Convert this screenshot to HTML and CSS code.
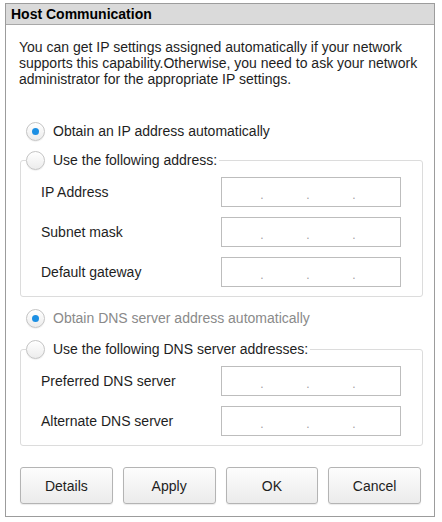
FILE: index.html
```html
<!DOCTYPE html>
<html>
<head>
<meta charset="utf-8">
<link rel="stylesheet" href="styles.css">
</head>
<body>
<div class="dialog">
  <div class="titlebar">Host Communication</div>
  <div class="content">
    <p class="intro">You can get IP settings assigned automatically if your network supports this capability.Otherwise, you need to ask your network administrator for the appropriate IP settings.</p>

    <div class="radio-row first"><span class="radio checked"></span><span class="rlabel">Obtain an IP address automatically</span></div>

    <fieldset class="group">
      <legend class="radio-row"><span class="radio"></span><span class="rlabel">Use the following address:</span></legend>
      <div class="rows">
        <div class="field"><span class="flabel">IP Address</span><div class="ipbox"><span></span><i>.</i><span></span><i>.</i><span></span><i>.</i><span></span></div></div>
        <div class="field"><span class="flabel">Subnet mask</span><div class="ipbox"><span></span><i>.</i><span></span><i>.</i><span></span><i>.</i><span></span></div></div>
        <div class="field"><span class="flabel">Default gateway</span><div class="ipbox"><span></span><i>.</i><span></span><i>.</i><span></span><i>.</i><span></span></div></div>
      </div>
    </fieldset>

    <div class="radio-row second"><span class="radio checked"></span><span class="rlabel disabled">Obtain DNS server address automatically</span></div>

    <fieldset class="group dns">
      <legend class="radio-row"><span class="radio"></span><span class="rlabel">Use the following DNS server addresses:</span></legend>
      <div class="rows">
        <div class="field"><span class="flabel">Preferred DNS server</span><div class="ipbox"><span></span><i>.</i><span></span><i>.</i><span></span><i>.</i><span></span></div></div>
        <div class="field"><span class="flabel">Alternate DNS server</span><div class="ipbox"><span></span><i>.</i><span></span><i>.</i><span></span><i>.</i><span></span></div></div>
      </div>
    </fieldset>

    <div class="buttons">
      <button class="btn">Details</button>
      <button class="btn">Apply</button>
      <button class="btn">OK</button>
      <button class="btn">Cancel</button>
    </div>
  </div>
</div>
</body>
</html>
```

FILE: styles.css
```css
html, body {
  margin: 0;
  padding: 0;
  background: #ffffff;
}
body {
  font-family: "Liberation Sans", Arial, sans-serif;
  font-size: 14px;
  color: #1e1e1e;
}
.dialog {
  margin: 3px 0 0 5px;
  width: 430px;
  height: 514px;
  box-sizing: border-box;
  border: 1px solid #9c9c9c;
  background: #ffffff;
}
.titlebar {
  height: 20px;
  line-height: 20px;
  background: #dadada;
  border-bottom: 1px solid #a8a8a8;
  padding-left: 5px;
  font-weight: bold;
  color: #000;
}
.content {
  padding: 0 0 0 14px;
}
.intro {
  margin: 14px 0 0 -1px;
  line-height: 16px;
  width: 404px;
}
.radio-row {
  display: flex;
  align-items: center;
  height: 20px;
  gap: 8px;
}
.radio-row.first {
  margin-top: 34px;
  padding-left: 6px;
}
.radio-row.second {
  margin-top: 11px;
  padding-left: 6px;
}
.radio {
  width: 19px;
  height: 19px;
  box-sizing: border-box;
  border-radius: 50%;
  border: 1px solid #c4c4c4;
  background: linear-gradient(#ffffff, #ececec);
  box-shadow: inset 0 1px 1px rgba(255,255,255,0.9), 0 1px 1px rgba(0,0,0,0.06);
  display: flex;
  align-items: center;
  justify-content: center;
  flex: none;
}
.radio.checked::after {
  content: "";
  width: 7px;
  height: 7px;
  border-radius: 50%;
  background: #1c8fe3;
}
.rlabel.disabled {
  color: #8a8a8a;
}
.group {
  margin: 9px 0 0 0;
  padding: 0;
  width: 403px;
  box-sizing: border-box;
  border: 1px solid #dcdcdc;
  border-radius: 3px;
}
.group.dns {
  margin-top: 11px;
}
.group legend {
  padding: 0 2px 0 0;
  margin-left: 5px;
}
.rows {
  padding: 7px 21px 9px 20px;
  display: flex;
  flex-direction: column;
  gap: 10px;
}
.field {
  display: flex;
  align-items: center;
  justify-content: space-between;
  height: 30px;
}
.ipbox {
  width: 180px;
  height: 30px;
  box-sizing: border-box;
  border: 1px solid #bdbdbd;
  background: #fff;
  display: grid;
  grid-template-columns: 38px 4px 42px 4px 42px 4px 1fr;
  align-items: center;
}
.ipbox i {
  font-style: normal;
  color: #a0a0a0;
  font-size: 12px;
  line-height: 1;
  padding-top: 6px;
  text-align: center;
}
.buttons {
  margin: 21px 0 0 0;
  width: 401px;
  display: grid;
  grid-template-columns: repeat(4, 1fr);
  gap: 10px;
}
.btn {
  height: 37px;
  border: 1px solid #b4b4b4;
  border-radius: 3px;
  background: linear-gradient(#fdfdfd, #ebebeb);
  box-shadow: 0 1px 1px rgba(0,0,0,0.08);
  font-family: "Liberation Sans", Arial, sans-serif;
  font-size: 14px;
  color: #1e1e1e;
  padding: 0;
}
```
